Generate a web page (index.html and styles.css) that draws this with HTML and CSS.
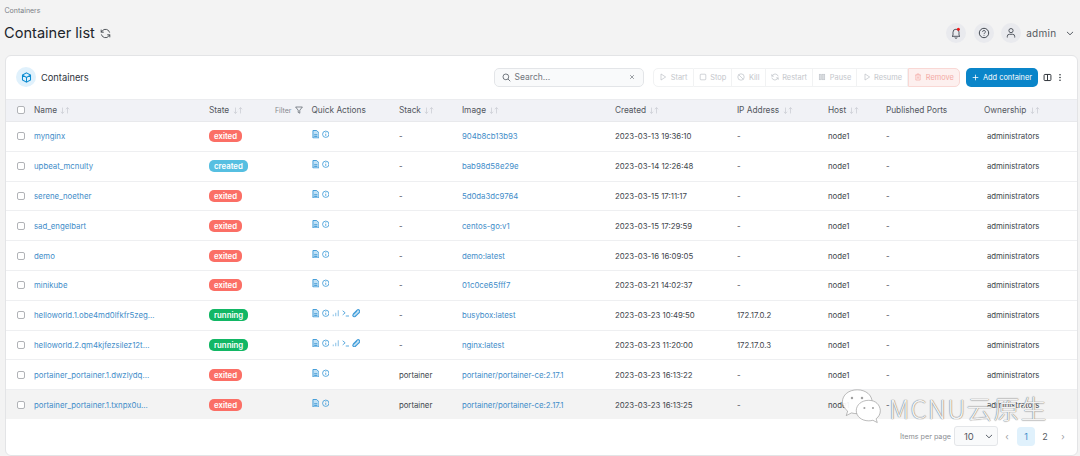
FILE: index.html
```html
<!DOCTYPE html>
<html lang="en">
<head>
<meta charset="utf-8">
<title>Container list</title>
<link rel="stylesheet" href="styles.css">
</head>
<body>
<svg class="defs" width="0" height="0" aria-hidden="true">
  <symbol id="i-sort" viewBox="0 0 12 8"><path d="M3 .5v7M1 5.500l2 2 2-2M9 7.500v-7M7 2.500l2-2 2 2" fill="none" stroke="#c9ccd3" stroke-width=".9"/></symbol>
  <symbol id="i-logs" viewBox="0 0 8 9"><path d="M1 .5h4l2.500 2.500v5.500H1z" fill="#bfe0f5" stroke="#3f9bd8"/><path d="M2.300 5h3.400M2.300 6.800h3.400" stroke="#2f8fd0" stroke-width=".9"/></symbol>
  <symbol id="i-info" viewBox="0 0 9 9"><circle cx="4.500" cy="4.500" r="3.800" fill="none" stroke="#3f9bd8"/><path d="M4.500 4v2.500M4.500 2.200v1" stroke="#3f9bd8"/></symbol>
  <symbol id="i-stats" viewBox="0 0 9 9"><path d="M1.500 8V6M4.500 8V4M7.500 8V1" stroke="#8fc4e8" stroke-width="1.300"/></symbol>
  <symbol id="i-exec" viewBox="0 0 9 9"><path d="M.8 1.500l3 2.500-3 2.500M4.500 7.800h4" fill="none" stroke="#3f9bd8"/></symbol>
  <symbol id="i-attach" viewBox="0 0 9 9"><path d="M1.200 5.400L5.400 1.200a1.700 1.700 0 0 1 2.400 2.400L3.600 7.800a1 1 0 0 1-2.200-2.200l3.600-3.500M3 8l4.800-4.200" fill="#bfe0f5" stroke="#3f9bd8" stroke-width="1.200"/></symbol>
</svg>

<div class="page-head">
  <div class="titles">
    <div class="crumb">Containers</div>
    <div class="title-row">
      <h1>Container list</h1>
      <svg class="refresh" viewBox="0 0 12 12"><path d="M10.500 5A4.600 4.600 0 0 0 2.400 3.200L1.300 4.600M1.300 1.800v2.800h2.800M1.500 7a4.600 4.600 0 0 0 8.100 1.800l1.100-1.400M10.700 10.200V7.400H7.900" fill="none" stroke="#44494f" stroke-width="1"/></svg>
    </div>
  </div>
  <div class="user-tools">
    <span class="round"><svg viewBox="0 0 12 12"><path d="M3 8.500V5.200a3 3 0 0 1 6 0v3.300l1 .8H2zM5 10.400a1 1 0 0 0 2 0" fill="none" stroke="#444a52" stroke-width=".9"/><circle cx="8.400" cy="2.300" r="1.500" fill="#f01818"/></svg></span>
    <span class="round"><svg viewBox="0 0 12 12"><circle cx="6" cy="6" r="4.700" fill="none" stroke="#444a52"/><path d="M4.600 4.800a1.400 1.400 0 1 1 2 1.300c-.4.2-.6.5-.6 1M6 8.200v.7" fill="none" stroke="#444a52" stroke-width=".9"/></svg></span>
    <span class="round"><svg viewBox="0 0 12 12"><circle cx="6" cy="3.600" r="2.100" fill="none" stroke="#444a52" stroke-width=".9"/><path d="M2.300 10.500V9.300a2 2 0 0 1 2-2h3.400a2 2 0 0 1 2 2v1.200" fill="none" stroke="#444a52" stroke-width=".9"/></svg></span>
    <span class="admin">admin</span>
    <svg class="chev" viewBox="0 0 10 6"><path d="M1.200 1l3.800 3.600L8.800 1" fill="none" stroke="#444a52" stroke-width="1.100"/></svg>
  </div>
</div>

<main class="card">
  <div class="toolbar">
    <span class="box-icon"><svg viewBox="0 0 12 12"><path d="M6 1l4.400 2.400v5.200L6 11 1.600 8.600V3.400zM1.800 3.500L6 6l4.200-2.500M6 6v5" fill="none" stroke="#0b8bd0" stroke-width="1.100"/></svg></span>
    <span class="card-title">Containers</span>
    <div class="search">
      <svg class="search-ic" viewBox="0 0 10 10"><circle cx="4.300" cy="4.300" r="3.200" fill="none" stroke="#555b64" stroke-width=".9"/><path d="M6.700 6.700L9.200 9.200" stroke="#555b64" stroke-width=".9"/></svg>
      <span class="search-text">Search...</span>
      <svg class="search-x" viewBox="0 0 8 8"><path d="M1.500 1.500l5 5M6.500 1.500l-5 5" stroke="#7b8087"/></svg>
    </div>
    <div class="actions">
      <span class="act"><svg viewBox="0 0 10 10"><path d="M2.500 1.200l5.800 3.800-5.800 3.800z" fill="none" stroke="#b7bcc2" stroke-width=".8"/></svg>Start</span>
      <span class="act"><svg viewBox="0 0 10 10"><rect x="1.500" y="1.500" width="7" height="7" rx="1" fill="none" stroke="#b7bcc2" stroke-width=".8"/></svg>Stop</span>
      <span class="act"><svg viewBox="0 0 10 10"><circle cx="5" cy="5" r="4" fill="none" stroke="#b7bcc2" stroke-width=".8"/><path d="M2.200 2.200l5.600 5.600" stroke="#b7bcc2" stroke-width=".8"/></svg>Kill</span>
      <span class="act"><svg viewBox="0 0 10 10"><path d="M9 4.200A4 4 0 0 0 2 2.800L1 4M1 1.500V4h2.500M1 5.800a4 4 0 0 0 7 1.400L9 6M9 8.500V6H6.500" fill="none" stroke="#b7bcc2" stroke-width=".8"/></svg>Restart</span>
      <span class="act"><svg viewBox="0 0 10 10"><rect x="1.500" y="1.500" width="2.800" height="7" fill="#dadde1" stroke="#b7bcc2" stroke-width=".6"/><rect x="5.700" y="1.500" width="2.800" height="7" fill="#dadde1" stroke="#b7bcc2" stroke-width=".6"/></svg>Pause</span>
      <span class="act"><svg viewBox="0 0 10 10"><path d="M2.500 1.200l5.800 3.800-5.800 3.800z" fill="none" stroke="#b7bcc2" stroke-width=".8"/></svg>Resume</span>
      <span class="act act-remove"><svg viewBox="0 0 10 10"><path d="M1.500 2.500h7M3.700 2.500V1.200h2.600v1.300M2.300 2.500v6.300h5.400V2.500M4.200 4.300v2.800M5.800 4.300v2.800" fill="none" stroke="#f2a6a0" stroke-width=".8"/></svg>Remove</span>
    </div>
    <span class="add-btn"><svg viewBox="0 0 8 8"><path d="M4 .8v6.400M.8 4h6.400" stroke="#fff" stroke-width=".9"/></svg>Add container</span>
    <svg class="cols-ic" viewBox="0 0 10 10"><rect x="1.200" y="1.600" width="7.600" height="6.800" rx="1" fill="none" stroke="#30353b" stroke-width="1.100"/><path d="M5 1.600v6.800" stroke="#30353b" stroke-width="1.100"/></svg>
    <svg class="more-ic" viewBox="0 0 4 10"><circle cx="2" cy="2" r=".9" fill="#30353b"/><circle cx="2" cy="5" r=".9" fill="#30353b"/><circle cx="2" cy="8" r=".9" fill="#30353b"/></svg>
  </div>

  <table class="list">
    <colgroup>
      <col class="c-check"><col class="c-name"><col class="c-state"><col class="c-quick"><col class="c-stack"><col class="c-image"><col class="c-created"><col class="c-ip"><col class="c-host"><col class="c-ports"><col class="c-own">
    </colgroup>
    <thead>
      <tr>
        <th><span class="cb"></span></th>
        <th>Name <svg class="sort"><use href="#i-sort"/></svg></th>
        <th><div class="state-head"><span>State <svg class="sort"><use href="#i-sort"/></svg></span><span class="filter">Filter <svg viewBox="0 0 8 8"><path d="M.6 1h6.800L4.800 4.200v3L3.200 6.400V4.200z" fill="none" stroke="#555b64" stroke-width=".7"/></svg></span></div></th>
        <th>Quick Actions</th>
        <th>Stack <svg class="sort"><use href="#i-sort"/></svg></th>
        <th>Image <svg class="sort"><use href="#i-sort"/></svg></th>
        <th>Created <svg class="sort"><use href="#i-sort"/></svg></th>
        <th>IP Address <svg class="sort"><use href="#i-sort"/></svg></th>
        <th>Host <svg class="sort"><use href="#i-sort"/></svg></th>
        <th>Published Ports</th>
        <th>Ownership <svg class="sort"><use href="#i-sort"/></svg></th>
      </tr>
    </thead>
    <tbody>
      <tr><td><span class="cb"></span></td><td class="link">mynginx</td><td><span class="badge exited">exited</span></td><td class="quick"><svg><use href="#i-logs"/></svg><svg><use href="#i-info"/></svg></td><td>-</td><td class="link">904b8cb13b93</td><td>2023-03-13 19:36:10</td><td>-</td><td>node1</td><td>-</td><td class="own">administrators</td></tr>
      <tr><td><span class="cb"></span></td><td class="link">upbeat_mcnulty</td><td><span class="badge created">created</span></td><td class="quick"><svg><use href="#i-logs"/></svg><svg><use href="#i-info"/></svg></td><td>-</td><td class="link">bab98d58e29e</td><td>2023-03-14 12:26:48</td><td>-</td><td>node1</td><td>-</td><td class="own">administrators</td></tr>
      <tr><td><span class="cb"></span></td><td class="link">serene_noether</td><td><span class="badge exited">exited</span></td><td class="quick"><svg><use href="#i-logs"/></svg><svg><use href="#i-info"/></svg></td><td>-</td><td class="link">5d0da3dc9764</td><td>2023-03-15 17:11:17</td><td>-</td><td>node1</td><td>-</td><td class="own">administrators</td></tr>
      <tr><td><span class="cb"></span></td><td class="link">sad_engelbart</td><td><span class="badge exited">exited</span></td><td class="quick"><svg><use href="#i-logs"/></svg><svg><use href="#i-info"/></svg></td><td>-</td><td class="link">centos-go:v1</td><td>2023-03-15 17:29:59</td><td>-</td><td>node1</td><td>-</td><td class="own">administrators</td></tr>
      <tr><td><span class="cb"></span></td><td class="link">demo</td><td><span class="badge exited">exited</span></td><td class="quick"><svg><use href="#i-logs"/></svg><svg><use href="#i-info"/></svg></td><td>-</td><td class="link">demo:latest</td><td>2023-03-16 16:09:05</td><td>-</td><td>node1</td><td>-</td><td class="own">administrators</td></tr>
      <tr><td><span class="cb"></span></td><td class="link">minikube</td><td><span class="badge exited">exited</span></td><td class="quick"><svg><use href="#i-logs"/></svg><svg><use href="#i-info"/></svg></td><td>-</td><td class="link">01c0ce65fff7</td><td>2023-03-21 14:02:37</td><td>-</td><td>node1</td><td>-</td><td class="own">administrators</td></tr>
      <tr><td><span class="cb"></span></td><td class="link">helloworld.1.obe4md0lfkfr5zeg...</td><td><span class="badge running">running</span></td><td class="quick"><svg><use href="#i-logs"/></svg><svg><use href="#i-info"/></svg><svg><use href="#i-stats"/></svg><svg><use href="#i-exec"/></svg><svg><use href="#i-attach"/></svg></td><td>-</td><td class="link">busybox:latest</td><td>2023-03-23 10:49:50</td><td>172.17.0.2</td><td>node1</td><td>-</td><td class="own">administrators</td></tr>
      <tr><td><span class="cb"></span></td><td class="link">helloworld.2.qm4kjfezsilez12t...</td><td><span class="badge running">running</span></td><td class="quick"><svg><use href="#i-logs"/></svg><svg><use href="#i-info"/></svg><svg><use href="#i-stats"/></svg><svg><use href="#i-exec"/></svg><svg><use href="#i-attach"/></svg></td><td>-</td><td class="link">nginx:latest</td><td>2023-03-23 11:20:00</td><td>172.17.0.3</td><td>node1</td><td>-</td><td class="own">administrators</td></tr>
      <tr><td><span class="cb"></span></td><td class="link">portainer_portainer.1.dwzlydq...</td><td><span class="badge exited">exited</span></td><td class="quick"><svg><use href="#i-logs"/></svg><svg><use href="#i-info"/></svg></td><td>portainer</td><td class="link">portainer/portainer-ce:2.17.1</td><td>2023-03-23 16:13:22</td><td>-</td><td>node1</td><td>-</td><td class="own">administrators</td></tr>
      <tr class="hover"><td><span class="cb"></span></td><td class="link">portainer_portainer.1.txnpx0u...</td><td><span class="badge exited">exited</span></td><td class="quick"><svg><use href="#i-logs"/></svg><svg><use href="#i-info"/></svg></td><td>portainer</td><td class="link">portainer/portainer-ce:2.17.1</td><td>2023-03-23 16:13:25</td><td>-</td><td>node1</td><td>-</td><td class="own">administrators</td></tr>
    </tbody>
  </table>

  <div class="pager">
    <span class="per-label">Items per page</span>
    <span class="per-select">10<svg viewBox="0 0 10 6"><path d="M1.200 1l3.800 3.600L8.800 1" fill="none" stroke="#555b64" stroke-width="1.200"/></svg></span>
    <span class="pg-arrow">‹</span>
    <span class="pg pg-on">1</span>
    <span class="pg">2</span>
    <span class="pg-arrow">›</span>
  </div>
</main>

<div class="watermark">
  <svg class="wm-logo" viewBox="0 0 44 38">
    <path d="M17 1C8 1 1.500 6.500 1.500 13.500c0 4 2.200 7.400 5.500 9.800L5.500 28l5.500-2.800c1.800.5 3.800.8 6 .8 9 0 15.500-5.500 15.500-12.500S26 1 17 1z" fill="#fff" fill-opacity=".92" stroke="#8a8a8a" stroke-width=".6"/>
    <path d="M29 12c-7.500 0-13 4.800-13 10.800S21.500 33.500 29 33.500c1.600 0 3-.2 4.400-.6l4.600 2.400-1.200-4c2.800-2 4.400-5 4.400-8.500C40.800 16.800 36.500 12 29 12z" fill="#fff" stroke="#8a8a8a" stroke-width=".6"/>
    <circle cx="11.500" cy="9.500" r="1.300" fill="#a0a0a0"/><circle cx="22" cy="9.500" r="1.300" fill="#a0a0a0"/><circle cx="24.500" cy="20" r="1.100" fill="#a0a0a0"/><circle cx="33.500" cy="20" r="1.100" fill="#a0a0a0"/>
  </svg>
  <span class="wm-text">MCNU云原生</span>
</div>
</body>
</html>
```
FILE: styles.css
```css
* { box-sizing: border-box; }
html, body { margin: 0; height: 456px; overflow: hidden; }
body {
  position: relative;
  background: #f3f3f3;
  font-family: Inter, "Noto Sans CJK SC", sans-serif;
  color: #3c4148;
  font-size: 8.5px;
  padding: 0 2px 0 4.5px;
}
.defs { position: absolute; }

.page-head { height: 55px; display: flex; justify-content: space-between; }
.crumb { font-size: 7px; color: #7a7f86; padding-top: 7px; line-height: 8px; }
.title-row { display: flex; align-items: center; gap: 5px; margin-top: 9px; margin-left: -.5px; }
h1 { margin: 0; font-size: 14.6px; font-weight: 400; line-height: 18px; color: #20252b; }
.refresh { width: 11px; height: 11px; }

.user-tools { display: flex; align-items: center; height: 20px; margin-top: 23px; }
.round { width: 20px; height: 20px; border-radius: 50%; background: #e9eaee; display: flex; align-items: center; justify-content: center; margin-right: 7.5px; }
.round svg { width: 12px; height: 12px; }
.round:nth-child(3) { margin-right: 5px; }
.admin { font-size: 10px; letter-spacing: .3px; color: #555a61; }
.chev { width: 8px; height: 5px; margin: 0 4px 0 9.5px; }

.card {
  height: 401px;
  background: #fff;
  border: 1px solid #e3e4e6;
  border-radius: 6px;
  overflow: hidden;
}
.toolbar { height: 42.5px; display: flex; align-items: center; padding: 0 15px 0 10.5px; }
.box-icon { width: 20px; height: 20px; border-radius: 50%; background: #e0f1fc; display: flex; align-items: center; justify-content: center; flex: none; }
.box-icon svg { width: 11px; height: 11px; }
.card-title { margin-left: 5px; font-size: 9.3px; color: #30353b; flex: 1; }

.search {
  flex: none;
  width: 150px; height: 19px;
  border: 1px solid #e3e5e8; border-radius: 5px;
  background: #f9fafb;
  display: flex; align-items: center; padding: 0 8px 0 6.5px;
  font-size: 8.5px; color: #70757c;
}
.search-ic { width: 9px; height: 9px; }
.search-text { margin-left: 4px; flex: 1; }
.search-x { width: 6px; height: 6px; }

.actions { flex: none; margin-left: 9px; display: flex; height: 19px; color: #c3c6cb; font-size: 7.4px; white-space: nowrap; }
.act {
  display: flex; align-items: center; gap: 3.5px;
  border: 1px solid #f1f2f3; border-left-width: 0;
  padding: 0 5.15px;
}
.act:first-child { border-left-width: 1px; border-radius: 5px 0 0 5px; }
.act svg { width: 8px; height: 8px; flex: none; }
.act-remove { background: #fdf0ef; border: 1px solid #f9d8d5; border-radius: 0 5px 5px 0; color: #f3aaa4; }
.add-btn {
  flex: none;
  margin-left: 6px; height: 19px; width: 72px;
  background: #0a85c9; border-radius: 5px; color: #fff;
  display: flex; align-items: center; justify-content: center; gap: 4px;
  font-size: 7.4px; white-space: nowrap;
}
.add-btn svg { width: 7px; height: 7px; }
.cols-ic { width: 9px; height: 9px; margin-left: 5px; flex: none; }
.more-ic { width: 4px; height: 9px; margin-left: 6px; flex: none; }

.list { border-collapse: collapse; table-layout: fixed; width: 100%; font-size: 7.8px; }
.c-check { width: 28.5px; } .c-name { width: 175px; } .c-state { width: 102.5px; } .c-quick { width: 87.4px; }
.c-stack { width: 63px; } .c-image { width: 153px; } .c-created { width: 122px; } .c-ip { width: 91px; }
.c-host { width: 58px; } .c-ports { width: 98px; }
thead tr { height: 22.5px; background: #f1f2f6; }
th { text-align: left; font-weight: 400; color: #53575e; font-size: 8.3px; padding: 0; border-top: 1px solid #ebecef; border-bottom: 1px solid #e8e9ec; white-space: nowrap; }
th:first-child, td:first-child { padding-left: 11px; }
tbody tr { height: 29.8px; border-bottom: 1px solid #eeeff1; }
td { padding: 0; white-space: nowrap; color: #41464c; }
tr.hover { background: #f3f3f3; border-bottom: 0; }
.link { color: #3f8dc9; }
.own { padding-left: 3px; }
.cb { display: block; width: 8px; height: 8px; border: 1px solid #b1b3b7; border-radius: 2px; background: #fff; }
.sort { width: 10px; height: 7px; vertical-align: -1px; margin-left: 1px; }
.state-head { display: flex; justify-content: space-between; align-items: center; padding-right: 9px; }
.filter { font-size: 7px; color: #85898f; display: flex; align-items: center; gap: 3px; }
.filter svg { width: 8px; height: 8px; }

.badge { display: inline-block; height: 12px; line-height: 12px; padding: 0 5px; border-radius: 5px; color: #fff; font-weight: 600; font-size: 7.8px; vertical-align: middle; }
.exited { background: #fb6f66; }
.created { background: #56bfe1; }
.running { background: #12b765; }

.quick svg { width: 7.5px; height: 8.5px; margin-right: 2.5px; vertical-align: 1.5px; }
.quick svg:nth-child(5) { width: 8.5px; }

.pager { height: 36px; display: flex; align-items: center; justify-content: flex-end; padding: 0 9px 2px 0; color: #73777d; }
.per-label { font-size: 7.2px; color: #8a8d92; margin-right: 3px; }
.per-select {
  width: 44px; height: 20px; border: 1px solid #e4e6e9; border-radius: 3px; background: #f9fafb;
  display: flex; align-items: center; justify-content: space-between; padding: 0 4px 0 9px; font-size: 9.5px; color: #55595f; margin-right: 4px;
}
.per-select svg { width: 8px; height: 5px; }
.pg-arrow { width: 10px; text-align: center; font-size: 9px; color: #9a9da2; margin-right: 5px; }
.pg { width: 18px; height: 19px; border-radius: 4px; display: flex; align-items: center; justify-content: center; font-size: 9px; margin-right: 1px; color: #55595f; }
.pg + .pg-arrow { margin: 0 0 0 3px; }
.pg-on { background: #e0f1fc; color: #3f8dc9; }

.watermark { position: absolute; left: 841px; top: 388px; display: flex; align-items: center; pointer-events: none; }
.wm-logo { width: 42px; height: 38px; flex: none; }
.wm-text { margin-left: 6px; font-size: 26px; font-weight: 300; font-family: "Noto Sans CJK SC", sans-serif; letter-spacing: 1px; color: rgba(255,255,255,.92); text-shadow: 0 0 1px #777, 0 0 1px #777; white-space: nowrap; }
```
